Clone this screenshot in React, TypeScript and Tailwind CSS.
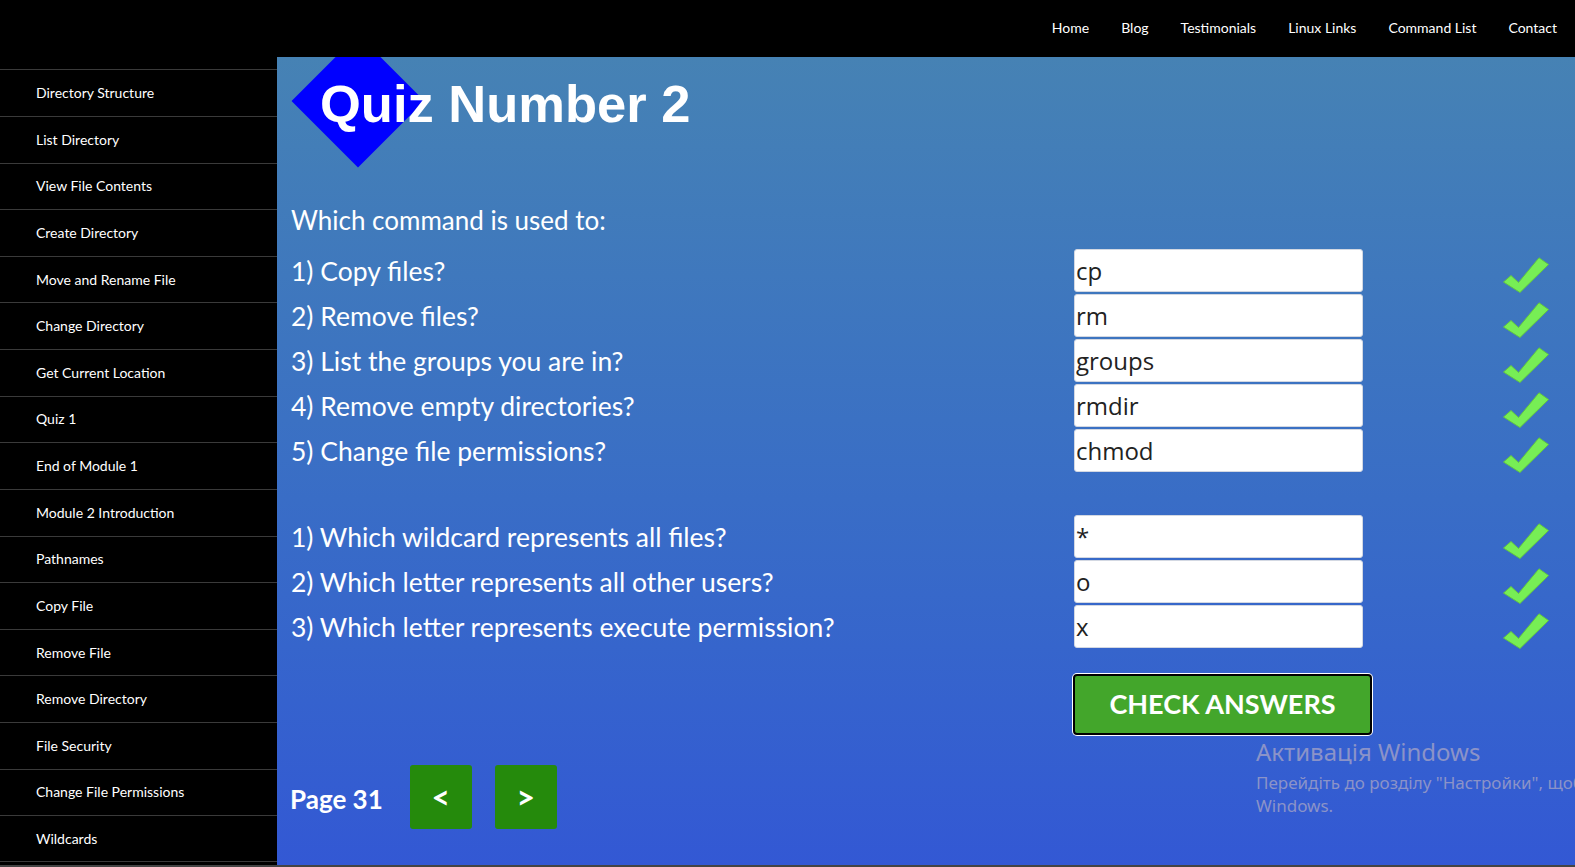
const navLinks = ['Home', 'Blog', 'Testimonials', 'Linux Links', 'Command List', 'Contact'];

const lessons = [
  'Directory Structure',
  'List Directory',
  'View File Contents',
  'Create Directory',
  'Move and Rename File',
  'Change Directory',
  'Get Current Location',
  'Quiz 1',
  'End of Module 1',
  'Module 2 Introduction',
  'Pathnames',
  'Copy File',
  'Remove File',
  'Remove Directory',
  'File Security',
  'Change File Permissions',
  'Wildcards',
];

const commandQuestions = [
  { q: '1) Copy files?', a: 'cp' },
  { q: '2) Remove files?', a: 'rm' },
  { q: '3) List the groups you are in?', a: 'groups' },
  { q: '4) Remove empty directories?', a: 'rmdir' },
  { q: '5) Change file permissions?', a: 'chmod' },
];

const wildcardQuestions = [
  { q: '1) Which wildcard represents all files?', a: '*' },
  { q: '2) Which letter represents all other users?', a: 'o' },
  { q: '3) Which letter represents execute permission?', a: 'x' },
];

function Tick() {
  return (
    <svg width="46" height="36" viewBox="0 0 46 36">
      <polygon
        points="0.5,25 8,18.5 15.5,25.5 36,0.8 45.5,7.5 17,35.5"
        fill="#77ee55"
        stroke="#63c640"
        strokeWidth="1"
        strokeLinejoin="round"
      />
    </svg>
  );
}

function QuizRow({ q, a }: { q: string; a: string }) {
  return (
    <div className="grid grid-cols-[783px_289px_1fr] h-[45px]">
      <div className="h-[45px] leading-[45px] translate-y-px text-[26.5px] text-white whitespace-nowrap">{q}</div>
      <div className="flex items-center">
        <input
          readOnly
          value={a}
          className="w-full h-[43.5px] bg-white border border-[#d3d8e2] rounded-[3px] pl-[1px] text-[24px] text-[#222] font-['Open_Sans',sans-serif] outline-none"
        />
      </div>
      <div className="pl-[140px] pt-[9px]">
        <Tick />
      </div>
    </div>
  );
}

export default function App() {
  return (
    <div className="w-full h-[867px] overflow-hidden flex flex-col bg-black font-['Lato',sans-serif]">
      <header className="h-[57px] shrink-0 bg-black flex justify-end items-center pr-[2px] pb-[3px]">
        {navLinks.map((link) => (
          <a key={link} href="#" className="px-[16px] text-[14px] text-white">
            {link}
          </a>
        ))}
      </header>

      <div className="flex h-[808px] shrink-0">
        <aside className="w-[277px] shrink-0 bg-black pt-[12.3px]">
          {lessons.map((item, i) => (
            <div
              key={item}
              className={`h-[46.63px] flex items-center pl-[36px] pb-[1px] border-t border-[#3a3a3a] text-[14px] text-white ${i === lessons.length - 1 ? 'border-b' : ''}`}
            >
              {item}
            </div>
          ))}
        </aside>

        <main className="flex-1 relative overflow-hidden bg-linear-to-b from-[#4682b4] to-[#3358d4] pl-[14px]">
          <div className="relative h-[139px]">
            <div className="absolute left-[20px] top-[-3px] w-[94px] h-[94px] bg-[#0000ff] rotate-45" />
            <h1 className="relative pt-[17px] pl-[29px] text-[52.5px] leading-[60px] font-bold text-white font-['Liberation_Sans',Arial,sans-serif]">
              Quiz Number 2
            </h1>
          </div>

          <div className="h-[45px] leading-[45px] translate-y-[2px] text-[26px] text-white">Which command is used to:</div>

          <div className="mt-[7px]">
            {commandQuestions.map((row) => (
              <QuizRow key={row.q} q={row.q} a={row.a} />
            ))}
          </div>

          <div className="mt-[41px]">
            {wildcardQuestions.map((row) => (
              <QuizRow key={row.q} q={row.q} a={row.a} />
            ))}
          </div>

          <div className="grid grid-cols-[783px_1fr] mt-[25px]">
            <div />
            <button className="w-[299px] h-[61px] -ml-[1px] rounded-[4px] border-2 border-black ring-1 ring-white bg-[#43a62b] text-white text-[27px] font-bold">
              CHECK ANSWERS
            </button>
          </div>

          <div className="flex items-center mt-[30px] -ml-[1px]">
            <span className="pt-[4px] text-[26px] font-bold text-white">Page 31</span>
            <button className="ml-[27px] w-[62px] h-[64px] rounded-[3px] bg-[#258a0c] text-white text-[32px] font-bold">&lt;</button>
            <button className="ml-[23px] w-[62px] h-[64px] rounded-[3px] bg-[#258a0c] text-white text-[32px] font-bold">&gt;</button>
          </div>

          <div className="absolute left-[979px] top-[681px] whitespace-nowrap text-[#8b93c8] font-['Noto_Sans',sans-serif]">
            <div className="text-[24px] leading-[28px]">Активація Windows</div>
            <div className="mt-[5px] text-[17px] leading-[23px]">Перейдіть до розділу "Настройки", щоб активувати</div>
            <div className="text-[17px] leading-[23px]">Windows.</div>
          </div>
        </main>
      </div>

      <div className="h-[2px] shrink-0 bg-[#444]" />
    </div>
  );
}
